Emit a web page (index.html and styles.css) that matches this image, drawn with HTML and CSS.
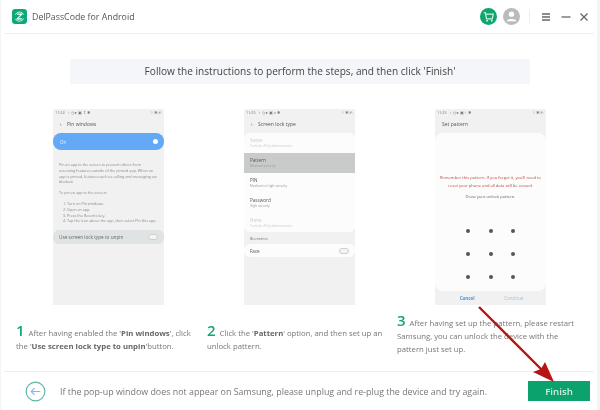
FILE: index.html
```html
<!DOCTYPE html>
<html lang="en">
<head>
<meta charset="utf-8">
<title>DelPassCode for Android</title>
<link rel="stylesheet" href="styles.css">
</head>
<body>
<div class="app">
  <header class="titlebar">
    <svg class="logo" viewBox="0 0 16 16"><rect width="16" height="16" rx="3.5" fill="#0ea878"/><path d="M12.5 6A5 5 0 0 0 3.5 6M3.5 10.500A5 5 0 0 0 12.500 10" fill="none" stroke="#d5f3e8" stroke-width="1"/><path d="M5.500 5.500H10.500L5.500 10.500H10.500" fill="none" stroke="#fff" stroke-width="1.200"/></svg>
    <span class="appname">DelPassCode for Android</span>
    <div class="tools">
      <span class="round cart"><svg viewBox="0 0 18 18" width="17" height="17"><path d="M4 5H5.500L7 11.500H13L14 6.500H6" fill="none" stroke="#cdf1e3" stroke-width="1.300"/><circle cx="7.500" cy="13.500" r="1" fill="#cdf1e3"/><circle cx="12.500" cy="13.500" r="1" fill="#cdf1e3"/></svg></span>
      <span class="round user"><svg viewBox="0 0 18 18" width="17" height="17"><circle cx="9" cy="6.500" r="2.800" fill="#fff"/><path d="M3.800 14C4.500 10.800 13.500 10.800 14.200 14Z" fill="#fff"/></svg></span>
      <i class="sep"></i>
      <svg class="tool" viewBox="0 0 10 10"><path d="M1 2H9M1 5H9M1 8H9" stroke="#666" stroke-width="1.300"/></svg>
      <svg class="tool" viewBox="0 0 10 10"><path d="M0.500 5H9.500" stroke="#666" stroke-width="1.300"/></svg>
      <svg class="tool" viewBox="0 0 10 10"><path d="M1.500 1.500L8.500 8.500M8.500 1.500L1.500 8.500" stroke="#666" stroke-width="1.300"/></svg>
    </div>
  </header>

  <h1 class="banner">Follow the instructions to perform the steps, and then click 'Finish'</h1>

  <section class="shots">
    <div class="phone">
      <div class="status"><span>11:24 &nbsp; ↑ ◷ ● ▣ ↥ ✱</span><span>⌔▣◉</span></div>
      <div class="navtitle"><span class="chev">‹</span>Pin windows</div>
      <div class="pill"><span>On</span><b class="knob"></b></div>
      <div class="desc">
        <p>Pin an app to the screen to prevent others from accessing features outside of the pinned app. When an app is pinned, features such as calling and messaging are blocked.</p>
        <p>To pin an app to the screen:</p>
        <p class="indent">1. Turn on Pin windows.<br>2. Open an app.<br>3. Press the Recents key.<br>4. Tap the icon above the app, then select Pin this app.</p>
      </div>
      <div class="unpin"><span>Use screen lock type to unpin</span><b class="toggle"></b></div>
    </div>

    <div class="phone">
      <div class="status"><span>11:25 &nbsp; ↑ ◷ ● ▣ ⁎ ✱</span><span>⌔▣◉</span></div>
      <div class="navtitle"><span class="chev">‹</span>Screen lock type</div>
      <div class="card">
        <div class="opt off">Swipe<small>Turned off by administrator</small></div>
        <div class="opt sel">Pattern<small>Medium security</small></div>
        <div class="opt">PIN<small>Medium to high security</small></div>
        <div class="opt">Password<small>High security</small></div>
        <div class="opt off">None<small>Turned off by administrator</small></div>
      </div>
      <div class="biolabel">Biometrics</div>
      <div class="face"><span>Face</span><b class="toggle"></b></div>
    </div>

    <div class="phone">
      <div class="status"><span>11:25 &nbsp; ↑ ◷ ● ▣ ↑ ✱</span><span>⌔▣◉</span></div>
      <div class="navtitle">Set pattern</div>
      <div class="patterncard">
        <p class="warn">Remember this pattern. If you forget it, you'll need to reset your phone and all data will be erased.</p>
        <p class="draw">Draw your unlock pattern.</p>
        <div class="dots"><i></i><i></i><i></i><i></i><i></i><i></i><i></i><i></i><i></i></div>
      </div>
      <div class="actions"><span class="cancel">Cancel</span><span class="cont">Continue</span></div>
    </div>
  </section>

  <section class="steps">
    <p class="step"><span class="num">1</span> After having enabled the '<b>Pin windows</b>', click the '<b>Use screen lock type to unpin</b>'button.</p>
    <p class="step"><span class="num">2</span> Click the '<b>Pattern</b>' option, and then set up an unlock pattern.</p>
    <p class="step"><span class="num">3</span> After having set up the pattern, please restart Samsung, you can unlock the device with the pattern just set up.</p>
  </section>

  <footer class="footer">
    <svg class="back" viewBox="0 0 22 22"><circle cx="11" cy="11" r="9.800" fill="none" stroke="#5fb5a5" stroke-width="1.200"/><path d="M16 11H6.500M10 7.500L6.500 11L10 14.500" fill="none" stroke="#8ab8dc" stroke-width="1.200"/></svg>
    <span class="hint">If the pop-up window does not appear on Samsung, please unplug and re-plug the device and try again.</span>
    <button class="finish">Finish</button>
  </footer>

  <svg class="arrow" viewBox="0 0 600 410" width="600" height="410"><path d="M479 307L548 376" stroke="#b81414" stroke-width="2.400"/><path d="M554 382L533 372L541 369L545 362Z" fill="#b81414"/></svg>
</div>
</body>
</html>
```
FILE: styles.css
```css
* { box-sizing: border-box; }
html, body { margin: 0; padding: 0; }
body { width: 600px; height: 410px; overflow: hidden; background: #fff; font-family: "Open Sans", sans-serif; }
p, h1 { margin: 0; font-weight: 400; }
.app { position: relative; width: 600px; height: 410px; display: flex; flex-direction: column; background: #fff; border-left: 1px solid #f3f4f7; border-right: 3px solid #f3f4f7; filter: blur(0.25px); }

.titlebar { height: 34px; margin: 0 3px; padding: 0 5px 0 8px; display: flex; align-items: center; border-bottom: 1px solid #f0f0f0; }
.logo { width: 15px; height: 15px; margin-right: 5px; }
.appname { font-size: 8.800px; color: #555; }
.tools { margin-left: auto; display: flex; align-items: center; }
.round { width: 17px; height: 17px; border-radius: 50%; display: block; }
.round svg { display: block; }
.cart { background: #0ea56f; margin-right: 6px; }
.user { background: #bbb; }
.sep { width: 1px; height: 15px; background: #eee; margin: 0 11px 0 9px; }
.tool { width: 10px; height: 10px; margin-right: 10px; }
.tool:nth-last-child(2) { margin-right: 8px; }
.tool:last-child { margin-right: 0; }

.banner { margin: 25px 67px 0 69px; height: 25px; line-height: 24px; background: #f5f6fa; text-align: center; font-size: 10.100px; color: #444; }

.shots { margin: 25px 0 0 52px; display: flex; gap: 80px; height: 197px; }
.phone { width: 111px; height: 196px; background: #f1f1f1; font-size: 4px; color: #777; filter: blur(0.2px); overflow: hidden; display: flex; flex-direction: column; }
.status { display: flex; justify-content: space-between; padding: 1px 2px 0; height: 7px; font-size: 3.800px; line-height: 5px; }
.navtitle { margin: 5px 0 0 7px; height: 12px; font-size: 5px; line-height: 6px; color: #555; }
.chev { display: inline-block; width: 7px; }
.pill { height: 17px; background: #64a9f6; border-radius: 8px; color: #e8f2ff; display: flex; align-items: center; justify-content: space-between; padding: 0 6px 0 7px; font-size: 4.500px; }
.knob { width: 5px; height: 5px; background: #fff; border-radius: 50%; }
.desc { margin-top: 12px; padding: 0 6px; font-size: 3.700px; line-height: 5.800px; color: #888; height: 68px; }
.desc p { margin-bottom: 5px; }
.desc .indent { padding-left: 4px; }
.unpin { height: 14px; background: #dfe3e4; border-radius: 6px; display: flex; align-items: center; justify-content: space-between; padding: 0 6px; font-size: 4.700px; color: #666; }
.toggle { width: 10px; height: 6px; border: 1px solid #ccc; border-radius: 3px; background: #f4f4f4; }

.card { background: #fcfcfc; border-radius: 6px; overflow: hidden; height: 99px; }
.opt { height: 20px; padding: 4px 6px 0; font-size: 4.600px; line-height: 6px; color: #555; }
.opt small { display: block; font-size: 3.300px; line-height: 5px; color: #999; }
.opt.off, .opt.off small { color: #ccc; }
.opt.sel { background: #c9cbcb; }
.biolabel { margin: 3px 0 0 6px; height: 9px; line-height: 8px; font-size: 3.600px; color: #777; }
.face { height: 13px; background: #fcfcfc; border-radius: 6px; display: flex; align-items: center; justify-content: space-between; padding: 0 6px; font-size: 4.600px; color: #555; }

.patterncard { height: 158px; background: #fcfcfc; border-radius: 8px; padding-top: 41px; text-align: center; }
.warn { font-size: 4.100px; line-height: 7.500px; color: #b5493c; padding: 0 4px; }
.draw { font-size: 4.100px; line-height: 6px; margin-top: 5px; color: #666; }
.dots { margin: 29px auto 0; width: 49px; display: grid; grid-template-columns: repeat(3, 4px); justify-content: space-between; row-gap: 19px; }
.dots i { width: 4px; height: 4px; border-radius: 50%; background: #555; }
.actions { display: flex; justify-content: space-around; padding: 4px 8px 0 10px; font-size: 4.500px; line-height: 6px; }
.cancel { color: #4a90e2; font-weight: 700; }
.cont { color: #9cc3e6; }

.steps { margin: 8px 0 0 15px; display: flex; gap: 12px; height: 57px; }
.step { flex: none; width: 178px; font-size: 7.750px; line-height: 13px; color: #777; }
.step b { color: #666; font-weight: 700; }
.num { font-size: 15px; line-height: 13px; font-weight: 600; color: #14a47a; margin-right: 2px; }
.step:nth-child(1) { width: 179px; margin-top: 10px; }
.step:nth-child(2) { margin-top: 10px; }
.step:nth-child(3) { width: 181px; }

.footer { height: 39px; margin: 0 3px; padding: 0 4px 0 21px; display: flex; align-items: center; border-top: 1px solid #eee; }
.back { width: 21px; height: 21px; margin-right: 14px; }
.hint { font-size: 8.900px; color: #777; }
.finish { margin-left: auto; width: 62px; height: 20px; padding: 0; border: 0; background: #0ba26e; color: #cfeee2; font: 600 9.700px "Open Sans", sans-serif; }
.arrow { position: absolute; left: -1px; top: 0; pointer-events: none; }
```
